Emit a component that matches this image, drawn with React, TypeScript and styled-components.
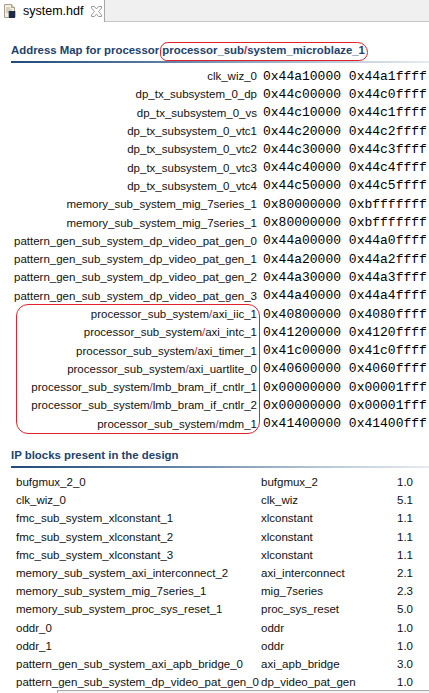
import React from 'react'
import styled, { createGlobalStyle } from 'styled-components'

const GlobalStyle = createGlobalStyle`
  html, body {
    margin: 0;
    padding: 0;
    background: #ffffff;
    overflow: hidden;
  }
  body {
    font-family: 'Liberation Sans', Arial, sans-serif;
    font-size: 11.5px;
    color: #111;
  }
`

const Page = styled.div`
  width: 429px;
  height: 693px;
  overflow: hidden;
  position: relative;
`

const TabBar = styled.div`
  display: flex;
  height: 21px;
  background: #f0f0f0;
  border-bottom: 1px solid #c6c6c6;
`

const Tab = styled.div`
  display: flex;
  align-items: center;
  width: 105px;
  height: 22px;
  background: #ffffff;
  border-right: 1px solid #a8a8a8;
  box-sizing: border-box;
  padding-left: 3px;
`

const TabLabel = styled.span`
  margin-left: 6px;
  font-size: 12.5px;
  color: #000;
`

const CloseBox = styled.span`
  display: flex;
  margin-left: 8px;
`

const Section = styled.section<{ $top: number }>`
  margin-top: ${p => p.$top}px;
`

const Title = styled.h2`
  margin: 0;
  padding: 0 0 3px 11px;
  font-size: 11.4px;
  line-height: 16px;
  font-weight: bold;
  color: #22426e;
  white-space: nowrap;
`

const Underline = styled.div`
  margin-left: 11px;
  height: 2px;
  background: linear-gradient(to right, #22497a 0%, #5a7ba0 35%, #b9c8d8 75%, #e6ebf0 100%);
`

const Circled = styled.span`
  position: relative;
  &::after {
    content: '';
    position: absolute;
    left: -2px;
    right: -3px;
    top: -2px;
    bottom: -5px;
    border: 1px solid #e3202c;
    border-radius: 9px 12px 10px 8px;
    pointer-events: none;
  }
`

const Slash = styled.span`
  color: #e3202c;
`

const AddressList = styled.div`
  margin-top: 4px;
`

const AddressRow = styled.div`
  display: flex;
  align-items: center;
  height: 18.3px;
  white-space: nowrap;
`

const RegionName = styled.span`
  width: 257px;
  flex: none;
  text-align: right;
`

const Addr = styled.span`
  margin-left: 6px;
  font-family: 'Liberation Mono', 'Courier New', monospace;
  font-size: 13px;
  color: #000;
`

const Group = styled.div`
  position: relative;
  &::after {
    content: '';
    position: absolute;
    left: 16px;
    width: 242px;
    top: -1px;
    bottom: -1px;
    border: 1px solid #e3202c;
    border-radius: 12px;
    pointer-events: none;
  }
`

const IpList = styled.div`
  margin-top: 5px;
`

const IpRow = styled.div`
  display: grid;
  grid-template-columns: 245px 136px auto;
  padding-left: 16px;
  height: 18.2px;
  align-items: center;
  white-space: nowrap;
`

const Cell = styled.span`
  overflow: visible;
`

const BottomBar = styled.div`
  position: absolute;
  left: 57px;
  top: 690px;
  width: 372px;
  height: 10px;
  border-top: 1px solid #a9a9a9;
  border-left: 1px solid #a9a9a9;
  background: #f4f4f4;
`

const addresses: [string, string, string][] = [
  ['clk_wiz_0', '0x44a10000', '0x44a1ffff'],
  ['dp_tx_subsystem_0_dp', '0x44c00000', '0x44c0ffff'],
  ['dp_tx_subsystem_0_vs', '0x44c10000', '0x44c1ffff'],
  ['dp_tx_subsystem_0_vtc1', '0x44c20000', '0x44c2ffff'],
  ['dp_tx_subsystem_0_vtc2', '0x44c30000', '0x44c3ffff'],
  ['dp_tx_subsystem_0_vtc3', '0x44c40000', '0x44c4ffff'],
  ['dp_tx_subsystem_0_vtc4', '0x44c50000', '0x44c5ffff'],
  ['memory_sub_system_mig_7series_1', '0x80000000', '0xbfffffff'],
  ['memory_sub_system_mig_7series_1', '0x80000000', '0xbfffffff'],
  ['pattern_gen_sub_system_dp_video_pat_gen_0', '0x44a00000', '0x44a0ffff'],
  ['pattern_gen_sub_system_dp_video_pat_gen_1', '0x44a20000', '0x44a2ffff'],
  ['pattern_gen_sub_system_dp_video_pat_gen_2', '0x44a30000', '0x44a3ffff'],
  ['pattern_gen_sub_system_dp_video_pat_gen_3', '0x44a40000', '0x44a4ffff'],
]

const processorAddresses: [string, string, string][] = [
  ['axi_iic_1', '0x40800000', '0x4080ffff'],
  ['axi_intc_1', '0x41200000', '0x4120ffff'],
  ['axi_timer_1', '0x41c00000', '0x41c0ffff'],
  ['axi_uartlite_0', '0x40600000', '0x4060ffff'],
  ['lmb_bram_if_cntlr_1', '0x00000000', '0x00001fff'],
  ['lmb_bram_if_cntlr_2', '0x00000000', '0x00001fff'],
  ['mdm_1', '0x41400000', '0x41400fff'],
]

const ipBlocks: [string, string, string][] = [
  ['bufgmux_2_0', 'bufgmux_2', '1.0'],
  ['clk_wiz_0', 'clk_wiz', '5.1'],
  ['fmc_sub_system_xlconstant_1', 'xlconstant', '1.1'],
  ['fmc_sub_system_xlconstant_2', 'xlconstant', '1.1'],
  ['fmc_sub_system_xlconstant_3', 'xlconstant', '1.1'],
  ['memory_sub_system_axi_interconnect_2', 'axi_interconnect', '2.1'],
  ['memory_sub_system_mig_7series_1', 'mig_7series', '2.3'],
  ['memory_sub_system_proc_sys_reset_1', 'proc_sys_reset', '5.0'],
  ['oddr_0', 'oddr', '1.0'],
  ['oddr_1', 'oddr', '1.0'],
  ['pattern_gen_sub_system_axi_apb_bridge_0', 'axi_apb_bridge', '3.0'],
  ['pattern_gen_sub_system_dp_video_pat_gen_0', 'dp_video_pat_gen', '1.0'],
]

function FileIcon() {
  return (
    <svg width="14" height="15" viewBox="0 0 14 15">
      <path d="M1.5 0.5h7l3 3v10h-10z" fill="#f3efe2" stroke="#a89f86" />
      <path d="M8.5 0.5v3h3" fill="#e2dcc8" stroke="#a89f86" />
      <path d="M3 4h4M3 6h6M3 8h3" stroke="#b8b09a" />
      <rect x="6" y="7" width="6" height="7" fill="#1d2b4a" />
      <path d="M5 8h1M5 10h1M5 12h1M12 8h1M12 10h1M12 12h1" stroke="#6c7890" />
    </svg>
  )
}

function CloseIcon() {
  return (
    <svg width="11" height="11" viewBox="0 0 11 11">
      <path
        d="M0.5 0.5h3l2 2.5 2-2.5h3v1.5l-3 3.5 3 3.5v1.5h-3l-2-2.5-2 2.5h-3v-1.5l3-3.5-3-3.5z"
        fill="#fff"
        stroke="#9a9a9a"
      />
    </svg>
  )
}

function AddressLine({ name, lo, hi }: { name: React.ReactNode; lo: string; hi: string }) {
  return (
    <AddressRow>
      <RegionName>{name}</RegionName>
      <Addr>
        {lo} {hi}
      </Addr>
    </AddressRow>
  )
}

export default function App() {
  return (
    <Page>
      <GlobalStyle />
      <TabBar>
        <Tab>
          <FileIcon />
          <TabLabel>system.hdf</TabLabel>
          <CloseBox>
            <CloseIcon />
          </CloseBox>
        </Tab>
      </TabBar>

      <Section $top={20}>
        <Title>
          Address Map for processor{' '}
          <Circled>
            processor_sub<Slash>/</Slash>system_microblaze_1
          </Circled>
        </Title>
        <Underline />
        <AddressList>
          {addresses.map(([name, lo, hi], i) => (
            <AddressLine key={i} name={name} lo={lo} hi={hi} />
          ))}
          <Group>
            {processorAddresses.map(([name, lo, hi]) => (
              <AddressLine
                key={name}
                name={
                  <>
                    processor_sub_system<Slash>/</Slash>
                    {name}
                  </>
                }
                lo={lo}
                hi={hi}
              />
            ))}
          </Group>
        </AddressList>
      </Section>

      <Section $top={14}>
        <Title>IP blocks present in the design</Title>
        <Underline />
        <IpList>
          {ipBlocks.map(([inst, type, ver]) => (
            <IpRow key={inst}>
              <Cell>{inst}</Cell>
              <Cell>{type}</Cell>
              <Cell>{ver}</Cell>
            </IpRow>
          ))}
        </IpList>
      </Section>
      <BottomBar />
    </Page>
  )
}
